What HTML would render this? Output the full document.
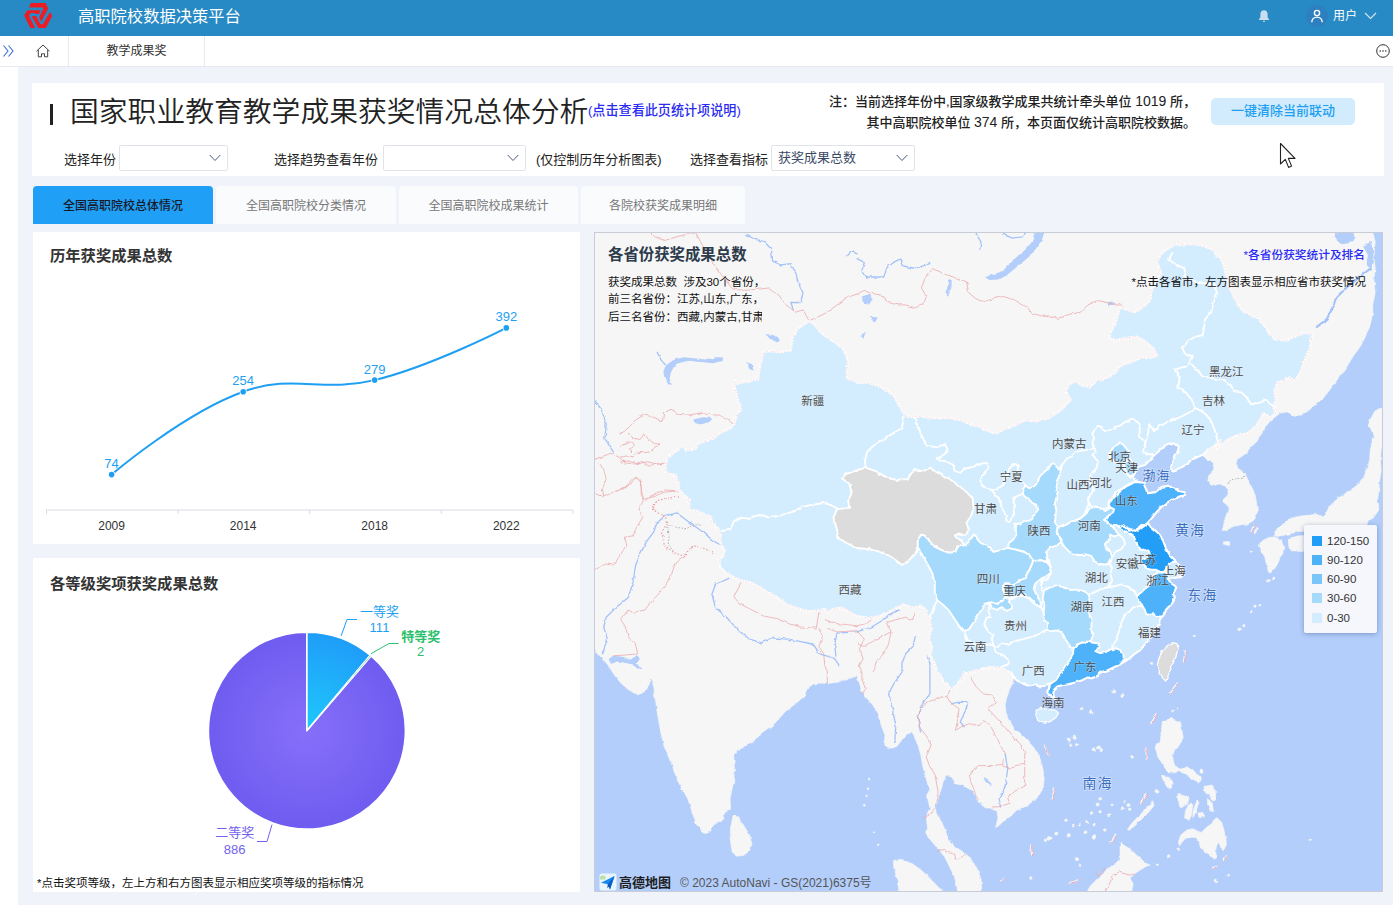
<!DOCTYPE html>
<html lang="zh-CN">
<head>
<meta charset="utf-8">
<title>高职院校数据决策平台</title>
<style>
*{box-sizing:border-box;margin:0;padding:0}
html,body{width:1393px;height:905px;overflow:hidden;background:#fff}
body{position:relative;font-family:"Liberation Sans","Noto Sans CJK SC",sans-serif;color:#333;font-size:12px}
.abs{position:absolute}
#hdr{left:0;top:0;width:1393px;height:36px;background:#288ac4}
#hdr .ttl{left:78px;top:0;height:32px;line-height:32px;font-size:16.3px;color:#fff;white-space:nowrap}
#hdr .usr{left:1333px;top:0;height:32px;line-height:32px;font-size:12px;color:#fff;white-space:nowrap}
#tabbar{left:0;top:36px;width:1393px;height:31px;background:#fff;border-bottom:1px solid #e6e9ef}
#tabbar .sep{top:0;width:1px;height:30px;background:#e6e9ef}
#tabbar .t1{left:69px;top:0;width:135px;height:30px;line-height:31px;text-align:center;font-size:12px;color:#333}
#side{left:0;top:67px;width:18px;height:838px;background:#fff}
#main{left:18px;top:67px;width:1375px;height:838px;background:#f0f4fa}
.card{background:#fff}
#tcard{left:32px;top:83px;width:1352px;height:93px}
#bigt{left:70px;top:91px;font-weight:350;height:42px;line-height:42px;font-size:28.8px;color:#222;white-space:nowrap;letter-spacing:0}
#bar{left:50px;top:104px;width:3px;height:21px;background:#222}
#lnk{left:588px;top:101px;height:20px;line-height:20px;font-size:13.1px;font-weight:500;color:#2a2af0;white-space:nowrap}
#note{left:770px;top:91px;width:426px;text-align:right;font-size:13px;font-weight:500;color:#222;line-height:20px;white-space:nowrap}
#note b{font-size:14px;font-weight:normal}
#btn{left:1211px;top:98px;width:144px;height:27px;border-radius:5px;background:#d2ebfd;color:#1e9ff2;font-size:13px;font-weight:500;text-align:center;line-height:26px}
.lbl{top:150px;height:20px;line-height:20px;font-size:13px;color:#222;white-space:nowrap}
.sel{top:145px;height:26px;border:1px solid #e0e3ea;border-radius:2px;background:#fff;font-size:13px;color:#3a4a66;line-height:23px;padding-left:6px;white-space:nowrap}
.sel svg{position:absolute;top:8px;width:12px;height:8px}
.tab{top:186px;height:38px;line-height:40px;text-align:center;font-size:12px;color:#777;background:#fafbfd;border-radius:4px 4px 0 0;white-space:nowrap}
.tab.on{background:#1f9ff5;color:#1a1a2a;font-weight:500}
.pt{font-size:15.3px;font-weight:bold;color:#333;white-space:nowrap;height:22px;line-height:22px}
#p1{left:33px;top:232px;width:547px;height:312px}
#p2{left:33px;top:558px;width:547px;height:334px}
#mapw{left:594px;top:232px;width:789px;height:660px;border:1px solid #c8ccd4;overflow:hidden;background:#b3cdfa}
</style>
</head>
<body>
<!-- header -->
<div id="hdr" class="abs">
  <svg class="abs" style="left:0;top:0" width="70" height="36" viewBox="0 0 70 36">
    <g fill="#ed1c24">
      <path d="M28.9 7.4 30.9 3 45.6 3 48.2 8.6 41.3 21.7 39.1 17.5 43.4 8.6 42.4 7.4Z"/>
      <path d="M40.9 10.3 27.3 10.3 24.1 15.5 30.3 28 35.1 28 29 15.7 30.9 13 34.9 13 35.3 13.9 38.9 13.9Z"/>
      <path d="M31.5 16.1 36.1 16.1 40.5 24.3 42.8 24.3 50 12.1 52.2 15.9 45.8 28 38.3 28Z"/>
    </g>
  </svg>
  <div class="abs ttl">高职院校数据决策平台</div>
  <svg class="abs" style="left:1256px;top:8px" width="16" height="16" viewBox="0 0 16 16"><path d="M8 2.2c-2.2 0-3.6 1.7-3.6 3.9v3.2L3 11.3v.7h10v-.7l-1.4-2V6.1C11.600 3.900 10.200 2.200 8 2.200ZM6.700 12.700h2.600c0 .7-.6 1.200-1.300 1.200s-1.300-.5-1.300-1.200Z" fill="#c9ddf0"/></svg>
  <svg class="abs" style="left:1306px;top:5px" width="22" height="22" viewBox="0 0 22 22"><circle cx="11" cy="11" r="11" fill="#2e7fc0"/><circle cx="11" cy="8" r="2.600" fill="none" stroke="#fff" stroke-width="1.400"/><path d="M5.800 17.300c0-3 2.300-5.200 5.200-5.200s5.200 2.200 5.200 5.200" fill="none" stroke="#fff" stroke-width="1.400"/></svg>
  <div class="abs usr">用户</div>
  <svg class="abs" style="left:1364px;top:12px" width="13" height="8" viewBox="0 0 13 8"><path d="M1 1l5.500 5.500L12 1" fill="none" stroke="#d6e6f4" stroke-width="1.100"/></svg>
</div>
<!-- page tab bar -->
<div id="tabbar" class="abs">
  <svg class="abs" style="left:2px;top:7px" width="14" height="16" viewBox="0 0 14 16"><path d="M1.500 2.500l4.500 5.500-4.500 5.500M6.500 2.500l4.500 5.500-4.500 5.500" fill="none" stroke="#3a6fd0" stroke-width="1.100"/></svg>
  <svg class="abs" style="left:35px;top:7px" width="16" height="16" viewBox="0 0 16 16"><path d="M1.500 8.200 8 2l6.500 6.200M3.300 7v6.800h3.200v-3h3v3h3.200V7" fill="none" stroke="#444" stroke-width="1"/></svg>
  <div class="abs sep" style="left:68px"></div>
  <div class="abs t1">教学成果奖</div>
  <div class="abs sep" style="left:204px"></div>
  <svg class="abs" style="left:1375px;top:7px" width="16" height="16" viewBox="0 0 16 16"><circle cx="8" cy="8" r="6.300" fill="none" stroke="#333" stroke-width="1"/><circle cx="5.200" cy="8" r=".8" fill="#333"/><circle cx="8" cy="8" r=".8" fill="#333"/><circle cx="10.800" cy="8" r=".8" fill="#333"/></svg>
</div>
<div id="side" class="abs"></div>
<div id="main" class="abs"></div>

<!-- title card -->
<div id="tcard" class="abs card"></div>
<div id="bar" class="abs"></div>
<div id="bigt" class="abs">国家职业教育教学成果获奖情况总体分析</div>
<div id="lnk" class="abs">(点击查看此页统计项说明)</div>
<div id="note" class="abs">注：当前选择年份中,国家级教学成果共统计牵头单位 <b>1019</b> 所，<br>其中高职院校单位 <b>374</b> 所，本页面仅统计高职院校数据。</div>
<div id="btn" class="abs">一键清除当前联动</div>
<svg class="abs" style="left:1279px;top:142px" width="20" height="30" viewBox="0 0 20 30"><path d="M1.500 1.500v20.500l4.800-4.600 3.300 8 3-1.300-3.300-7.700h6.700Z" fill="#fff" stroke="#222" stroke-width="1.100" stroke-linejoin="round"/></svg>

<div class="abs lbl" style="left:64px">选择年份</div>
<div class="abs sel" style="left:119px;width:109px"><svg style="left:89px" viewBox="0 0 12 8"><path d="M.7 1l5.300 5.500L11.300 1" fill="none" stroke="#4a5a78" stroke-width="1"/></svg></div>
<div class="abs lbl" style="left:274px">选择趋势查看年份</div>
<div class="abs sel" style="left:383px;width:143px"><svg style="left:123px" viewBox="0 0 12 8"><path d="M.7 1l5.300 5.500L11.300 1" fill="none" stroke="#4a5a78" stroke-width="1"/></svg></div>
<div class="abs lbl" style="left:536px">(仅控制历年分析图表)</div>
<div class="abs lbl" style="left:690px">选择查看指标</div>
<div class="abs sel" style="left:771px;width:144px">获奖成果总数<svg style="left:124px" viewBox="0 0 12 8"><path d="M.7 1l5.300 5.500L11.300 1" fill="none" stroke="#4a5a78" stroke-width="1"/></svg></div>

<!-- tabs -->
<div class="abs tab on" style="left:33px;width:180px">全国高职院校总体情况</div>
<div class="abs tab" style="left:216px;width:180px">全国高职院校分类情况</div>
<div class="abs tab" style="left:399px;width:179px">全国高职院校成果统计</div>
<div class="abs tab" style="left:581px;width:164px">各院校获奖成果明细</div>

<!-- panel 1: line chart -->
<div id="p1" class="abs card">
  <div class="abs pt" style="left:17px;top:13px">历年获奖成果总数</div>
  <svg class="abs" style="left:0;top:0" width="547" height="312" viewBox="0 0 547 312" font-family="'Liberation Sans','Noto Sans CJK SC',sans-serif">
<path d="M13 278.0H540" stroke="#d8dbe2" stroke-width="1" fill="none"/>
<path d="M13.5 278.0v4M145.1 278.0v4M276.7 278.0v4M408.3 278.0v4M539.9 278.0v4" stroke="#d8dbe2" stroke-width="1" fill="none"/>
<text x="78.6" y="298.0" font-size="12" fill="#333" text-anchor="middle">2009</text>
<text x="210.2" y="298.0" font-size="12" fill="#333" text-anchor="middle">2014</text>
<text x="341.7" y="298.0" font-size="12" fill="#333" text-anchor="middle">2018</text>
<text x="473.3" y="298.0" font-size="12" fill="#333" text-anchor="middle">2022</text>
<path d="M78.6 242.6 C78.6 242.6 150.4 181.2 210.2 159.7 C260.9 141.5 288.4 161.0 341.7 148.1 C398.9 134.2 473.3 95.9 473.3 95.9" fill="none" stroke="#1e9ff2" stroke-width="2" stroke-linecap="round"/>
<circle cx="78.6" cy="242.6" r="3.6" fill="#fff"/><circle cx="78.6" cy="242.6" r="2.8" fill="#1e9ff2"/>
<text x="78.6" y="236.1" font-size="13" fill="#1e9ff2" text-anchor="middle">74</text>
<circle cx="210.2" cy="159.7" r="3.6" fill="#fff"/><circle cx="210.2" cy="159.7" r="2.8" fill="#1e9ff2"/>
<text x="210.2" y="153.2" font-size="13" fill="#1e9ff2" text-anchor="middle">254</text>
<circle cx="341.7" cy="148.1" r="3.6" fill="#fff"/><circle cx="341.7" cy="148.1" r="2.8" fill="#1e9ff2"/>
<text x="341.7" y="141.6" font-size="13" fill="#1e9ff2" text-anchor="middle">279</text>
<circle cx="473.3" cy="95.9" r="3.6" fill="#fff"/><circle cx="473.3" cy="95.9" r="2.8" fill="#1e9ff2"/>
<text x="473.3" y="89.4" font-size="13" fill="#1e9ff2" text-anchor="middle">392</text>
</svg>
</div>

<!-- panel 2: pie chart -->
<div id="p2" class="abs card">
  <div class="abs pt" style="left:17px;top:15px">各等级奖项获奖成果总数</div>
  <svg class="abs" style="left:0;top:0" width="547" height="334" viewBox="0 0 547 334" font-family="'Liberation Sans','Noto Sans CJK SC',sans-serif">
<defs><radialGradient id="gp" gradientUnits="userSpaceOnUse" cx="273.9" cy="172.6" r="98.5"><stop offset="0" stop-color="#866ff9"/><stop offset="1" stop-color="#6f5cf0"/></radialGradient><radialGradient id="gb" gradientUnits="userSpaceOnUse" cx="273.9" cy="172.6" r="98.5"><stop offset="0" stop-color="#1fc8fc"/><stop offset="1" stop-color="#1f9df8"/></radialGradient></defs>
<path d="M273.90 172.60 L338.16 97.95 A98.5 98.5 0 1 1 273.90 74.10 Z" fill="url(#gp)" stroke="#fff" stroke-width="1.6" stroke-linejoin="round"/>
<path d="M273.90 172.60 L273.90 74.10 A98.5 98.5 0 0 1 337.21 97.14 Z" fill="url(#gb)" stroke="#fff" stroke-width="1.6" stroke-linejoin="round"/>
<path d="M273.90 172.60 L337.21 97.14 A98.5 98.5 0 0 1 338.16 97.95 Z" fill="#2dbf6e" stroke="#fff" stroke-width="1"/>
<path d="M308.2 77.8 L314.0 61.5 L324.0 61.5" fill="none" stroke="#1e9ff2" stroke-width="1"/>
<path d="M338.0 95.7 L356.0 85.5 L365.7 85.5" fill="none" stroke="#2dbf6e" stroke-width="1"/>
<path d="M239.0 266.6 L234.0 283.5 L224.0 283.5" fill="none" stroke="#7263ee" stroke-width="1"/>
<text x="346.5" y="58.0" font-size="13" fill="#1e9ff2" text-anchor="middle">一等奖</text>
<text x="346.5" y="73.7" font-size="13" fill="#1e9ff2" text-anchor="middle">111</text>
<text x="387.7" y="82.6" font-size="13" fill="#2dbf6e" text-anchor="middle" font-weight="bold">特等奖</text>
<text x="387.7" y="98.4" font-size="13" fill="#2dbf6e" text-anchor="middle">2</text>
<text x="201.7" y="279.3" font-size="13" fill="#7263ee" text-anchor="middle">二等奖</text>
<text x="201.7" y="295.7" font-size="13" fill="#7263ee" text-anchor="middle">886</text>
</svg>
  <div class="abs" style="left:4px;top:317px;font-size:11.5px;color:#111;white-space:nowrap;line-height:16px">*点击奖项等级，左上方和右方图表显示相应奖项等级的指标情况</div>
</div>

<!-- map -->
<div id="mapw" class="abs">
<svg class="abs" style="left:-1px;top:-1px" width="789" height="660" viewBox="594 232 789 660" font-family="'Liberation Sans','Noto Sans CJK SC',sans-serif">
<defs><filter id="rough" x="594" y="232" width="789" height="660" filterUnits="userSpaceOnUse"><feTurbulence type="fractalNoise" baseFrequency="0.16" numOctaves="2" seed="7" result="n"/><feDisplacementMap in="SourceGraphic" in2="n" scale="3.2" xChannelSelector="R" yChannelSelector="G"/></filter></defs>
<rect x="590" y="228" width="800" height="670" fill="#b3cefb"/>
<g filter="url(#rough)">
<g fill="#f6f6f6" stroke="#f6f6f6" stroke-width="0.6" stroke-linejoin="round">
<path d="M1372.8 232.0 1375.2 241.7 1374.0 256.3 1375.2 268.5 1374.0 280.6 1375.2 292.8 1372.8 304.9 1372.8 312.2 1370.4 324.4 1365.5 336.5 1360.6 346.2 1353.3 356.0 1346.1 368.1 1338.8 377.8 1331.5 387.6 1324.2 397.3 1314.5 405.8 1304.7 413.1 1295.0 416.7 1287.7 411.9 1280.4 413.1 1275.6 416.7 1270.7 420.4 1265.8 426.5 1261.0 433.8 1257.3 441.0 1251.3 447.1 1246.4 452.0 1247.5 452.2 1243.0 455.5 1238.6 458.8 1236.4 462.1 1235.9 466.0 1238.6 468.7 1241.9 470.9 1245.2 474.3 1247.5 478.7 1250.2 484.2 1253.0 489.7 1255.2 495.2 1256.3 500.8 1256.9 506.3 1257.4 511.8 1256.3 516.2 1254.1 520.1 1250.8 522.3 1247.5 524.0 1243.0 524.5 1238.6 525.6 1234.2 527.3 1229.8 528.4 1225.4 530.1 1222.0 530.6 1223.1 527.3 1224.3 521.8 1225.4 517.3 1227.0 512.9 1228.1 508.5 1226.5 504.6 1223.1 501.9 1223.1 498.6 1227.0 496.4 1228.1 493.0 1227.6 489.2 1225.4 486.4 1222.0 484.2 1217.6 484.2 1213.8 485.9 1210.4 484.2 1207.7 480.9 1208.8 476.5 1211.5 473.1 1213.8 468.7 1213.8 463.8 1211.0 461.0 1205.5 458.2 1202.2 454.9 1202.2 454.9 1196.6 457.7 1190.0 459.9 1188.3 463.6 1181.7 467.0 1176.0 469.8 1171.3 472.2 1171.3 467.0 1172.3 461.3 1174.2 455.7 1177.9 451.0 1178.9 446.3 1174.2 443.5 1168.5 443.5 1163.8 446.3 1159.1 451.0 1153.5 455.7 1149.7 460.4 1145.0 465.1 1140.3 466.0 1135.7 468.8 1132.8 474.5 1133.8 478.2 1136.6 482.0 1143.2 482.9 1146.0 489.5 1147.9 493.3 1155.4 492.3 1162.0 486.7 1168.5 485.8 1174.2 488.6 1179.8 491.4 1184.5 492.3 1183.6 495.1 1177.9 497.0 1172.3 499.8 1166.7 502.7 1162.0 506.4 1157.3 511.1 1153.5 515.8 1149.7 520.5 1146.9 523.3 1147.7 523.4 1150.7 526.9 1155.7 530.9 1159.7 534.9 1162.6 539.9 1164.6 544.8 1166.6 549.8 1169.6 554.8 1173.6 558.8 1176.6 561.7 1179.6 565.7 1182.5 569.7 1183.6 570.0 1184.1 574.9 1179.7 576.9 1174.7 577.9 1170.7 577.4 1169.2 579.4 1169.7 582.4 1173.7 584.9 1176.2 587.4 1174.7 590.8 1172.7 593.8 1174.7 596.8 1173.7 600.8 1171.7 603.8 1168.7 606.8 1165.7 609.8 1163.7 613.7 1161.7 616.7 1159.8 620.7 1159.1 623.9 1155.4 629.5 1151.6 635.1 1147.9 640.8 1144.1 645.5 1140.3 650.2 1134.7 653.9 1130.0 657.7 1125.3 661.4 1119.7 664.3 1114.0 667.1 1108.4 669.9 1102.8 671.8 1099.0 673.7 1095.3 676.5 1091.5 678.4 1087.7 677.4 1082.1 680.2 1076.5 682.1 1069.0 684.0 1063.3 684.9 1057.7 686.2 1053.9 689.6 1053.0 695.3 1054.9 699.0 1051.1 698.1 1048.3 693.4 1049.2 687.7 1050.2 684.0 1044.5 685.9 1038.9 686.2 1033.3 684.9 1027.6 685.5 1023.9 684.0 1020.1 682.1 1016.4 680.2 1014.5 677.4 1012.6 682.1 1009.8 689.6 1007.0 697.1 1005.1 704.7 1006.0 712.2 1008.8 719.7 1013.5 727.2 1015.2 729.9 1019.9 732.8 1027.2 740.1 1035.7 749.8 1040.5 759.5 1043.0 769.2 1044.2 779.0 1043.0 788.7 1039.3 796.0 1032.0 802.0 1024.7 806.9 1016.2 810.6 1011.4 815.4 1002.8 822.7 995.6 827.6 998.0 817.8 996.8 810.6 991.9 808.1 985.8 808.1 981.0 804.5 977.3 800.8 973.7 792.3 968.8 788.7 961.5 785.0 954.2 783.8 954.2 779.0 950.6 775.3 945.7 776.5 943.3 781.4 940.9 791.1 938.4 798.4 934.8 808.1 937.2 815.4 942.1 822.7 945.7 832.4 948.2 839.7 953.0 845.8 961.5 850.7 966.4 854.3 971.2 859.2 977.3 868.9 981.0 878.6 982.2 893.2 957.9 893.2 956.7 885.9 954.2 876.2 949.4 866.5 944.5 856.7 938.4 849.4 932.4 842.2 926.3 834.9 927.5 827.6 926.3 817.8 929.9 808.1 927.5 798.4 928.7 788.7 926.3 779.0 922.6 766.8 920.7 754.6 917.8 744.9 914.1 736.4 911.7 732.8 908.0 734.0 902.0 740.1 895.9 747.4 887.4 748.6 883.7 744.9 885.0 735.2 881.3 725.5 877.7 714.5 871.6 703.6 863.1 693.9 858.9 682.9 857.0 675.6 846.8 679.3 837.1 682.2 827.3 683.7 820.1 682.9 812.8 684.2 806.0 690.2 804.3 696.3 795.8 703.6 786.0 710.9 773.9 724.3 761.7 732.8 755.6 740.1 745.9 744.9 737.4 749.8 733.8 757.1 734.5 769.2 733.8 781.4 730.1 798.4 730.6 809.3 726.5 810.6 722.8 815.4 724.0 819.1 719.2 821.5 713.6 825.1 710.7 831.2 706.3 833.4 702.2 831.2 696.1 823.9 692.4 813.0 687.6 798.4 677.9 781.4 671.8 764.4 664.5 747.4 660.8 732.8 657.7 715.8 654.8 696.3 653.6 686.6 651.9 680.5 650.4 676.9 649.4 682.9 646.3 690.2 639.0 695.1 630.5 691.4 620.7 682.9 614.7 675.6 608.6 665.9 603.7 659.8 597.6 653.8 592.8 647.7 590.0 228.0Z"/>
<path d="M733.0 815.4 737.4 816.6 743.5 825.1 749.6 834.9 752.0 843.4 749.6 850.7 743.5 855.5 736.2 856.2 732.1 850.7 730.1 839.7 730.6 827.6 732.1 820.3Z"/>
<path d="M893.5 860.4 900.8 859.2 912.9 864.0 922.6 871.3 932.4 881.0 939.6 888.3 945.7 894.4 899.5 894.4 897.1 878.6 893.5 866.5Z"/>
<path d="M1085.5 894.4 1090.3 885.9 1100.1 876.2 1107.4 868.9 1114.7 864.0 1120.0 859.2 1120.0 842.2 1124.9 845.8 1130.9 849.4 1137.0 855.5 1144.3 861.6 1149.2 865.2 1141.9 868.9 1134.6 873.8 1129.7 878.6 1133.4 883.5 1130.9 894.4Z"/>
<path d="M1162.5 720.6 1172.3 718.7 1180.3 721.8 1182.0 730.3 1183.2 737.6 1179.6 744.9 1174.7 749.8 1172.3 757.1 1174.7 765.6 1180.8 769.2 1186.8 766.8 1192.9 770.4 1197.8 774.1 1201.4 779.0 1199.0 783.8 1192.9 779.0 1188.1 775.3 1183.2 772.9 1178.3 771.7 1173.5 772.9 1168.6 772.9 1165.0 768.0 1161.3 761.9 1157.7 757.1 1155.2 747.4 1156.5 743.7 1160.1 742.5 1161.3 732.8 1161.8 725.5Z"/>
<path d="M1161.3 775.3 1168.6 776.5 1172.3 781.4 1171.5 788.2 1167.4 787.5 1163.8 781.4Z"/>
<path d="M1203.9 786.2 1212.4 785.0 1215.3 791.1 1216.0 799.6 1212.4 800.8 1208.7 796.0 1205.1 792.3Z"/>
<path d="M1207.5 798.4 1212.4 803.3 1213.6 811.8 1209.9 810.6 1207.5 804.5Z"/>
<path d="M1177.9 793.5 1184.4 794.8 1190.5 798.4 1186.8 804.5 1180.8 808.1 1177.9 803.3Z"/>
<path d="M1189.3 803.3 1192.9 804.5 1191.7 813.0 1189.3 820.3 1184.4 817.8 1185.6 810.6Z"/>
<path d="M1196.6 800.8 1199.0 802.0 1195.4 813.0 1192.9 817.8 1192.9 811.8Z"/>
<path d="M1197.8 813.0 1203.9 812.5 1204.6 816.6 1199.0 817.4Z"/>
<path d="M1127.3 830.0 1132.2 822.7 1138.2 816.6 1144.3 810.6 1150.4 804.5 1152.8 800.8 1154.0 805.7 1148.0 813.0 1141.9 819.1 1135.8 825.1 1129.7 830.0Z"/>
<path d="M1178.3 842.2 1180.8 834.9 1186.8 830.0 1192.9 828.8 1197.8 831.2 1201.4 832.4 1206.3 827.6 1211.2 823.9 1217.2 817.8 1220.9 821.5 1223.3 827.6 1225.7 837.3 1226.5 844.6 1223.3 850.7 1220.9 847.0 1218.4 842.2 1216.0 847.0 1216.0 856.7 1213.6 860.4 1209.9 855.5 1203.9 851.9 1200.2 847.0 1199.0 840.9 1195.4 837.3 1190.5 837.3 1185.6 838.5 1182.0 842.2 1179.6 845.8Z"/>
<path d="M1223.3 541.9 1229.4 541.5 1229.9 544.9 1223.3 545.3Z"/>
<path d="M1258.1 545.3 1262.7 540.6 1268.9 537.5 1275.1 536.7 1281.3 540.6 1283.6 546.8 1282.9 553.0 1279.8 559.2 1276.7 565.4 1272.8 571.6 1269.7 573.1 1267.4 568.5 1265.8 562.3 1264.3 556.1 1261.2 551.5Z"/>
<path d="M1372.6 438.5 1370.3 449.3 1369.6 458.6 1368.0 467.9 1363.4 477.2 1357.2 484.9 1349.4 491.1 1341.7 495.7 1335.5 500.4 1329.3 506.6 1326.2 512.8 1323.1 517.4 1316.9 514.3 1309.2 515.1 1301.4 515.9 1293.7 517.4 1287.5 520.5 1281.3 526.7 1275.1 531.3 1273.6 535.2 1278.2 536.3 1286.0 534.7 1292.2 533.2 1298.3 531.6 1304.5 531.3 1316.9 532.9 1332.4 534.4 1347.9 532.9 1363.4 529.8 1369.6 520.5 1374.2 515.9 1378.1 509.7 1377.3 501.9 1378.8 491.1 1379.6 480.2 1381.2 471.0 1380.4 460.1 1381.2 449.3 1385.8 443.1 1385.8 438.5Z"/>
<path d="M1288.3 540.6 1292.2 537.5 1298.3 536.0 1304.5 535.2 1316.9 536.0 1320.0 542.2 1313.8 548.4 1301.4 551.5 1292.2 550.7 1289.1 546.8Z"/>
<path d="M1387.4 405.8 1375.2 410.7 1370.4 419.2 1367.9 426.5 1372.8 431.3 1375.2 441.0 1378.9 445.9 1387.4 443.5Z"/>
<path d="M1254.1 532.3 1256.1 527.3 1257.4 527.5 1255.9 533.0Z"/>
<circle cx="1268.3" cy="580.8" r="1.3"/>
<circle cx="1273.1" cy="578.4" r="1.3"/>
<circle cx="1254.9" cy="606.4" r="1.3"/>
<circle cx="1259.8" cy="604.6" r="1.3"/>
<circle cx="1251.3" cy="612.4" r="1.0"/>
<circle cx="1239.1" cy="629.4" r="1.3"/>
<circle cx="1244.0" cy="625.8" r="1.3"/>
<circle cx="1194.1" cy="635.5" r="1.3"/>
<circle cx="1251.3" cy="551.7" r="1.0"/>
<circle cx="1151.6" cy="663.5" r="1.3"/>
<circle cx="1122.4" cy="695.1" r="1.6"/>
<circle cx="1132.2" cy="756.6" r="1.6"/>
<circle cx="1172.3" cy="710.9" r="1.0"/>
<circle cx="1177.1" cy="708.5" r="0.7"/>
<circle cx="1156.5" cy="791.1" r="1.6"/>
<circle cx="1201.4" cy="771.7" r="1.6"/>
<circle cx="1228.2" cy="875.0" r="1.3"/>
<circle cx="1215.3" cy="881.5" r="1.3"/>
<circle cx="1178.3" cy="849.4" r="1.3"/>
<circle cx="1168.6" cy="856.0" r="1.3"/>
<circle cx="1156.5" cy="865.2" r="1.3"/>
<circle cx="1310.8" cy="839.7" r="0.7"/>
<circle cx="1121.9" cy="808.1" r="1.6"/>
<circle cx="1128.5" cy="805.2" r="1.6"/>
<circle cx="1124.9" cy="802.0" r="1.3"/>
<circle cx="1129.7" cy="809.3" r="1.3"/>
<circle cx="1068.5" cy="740.1" r="2.0"/>
<circle cx="1074.5" cy="737.6" r="1.6"/>
<circle cx="1077.0" cy="744.9" r="1.6"/>
<circle cx="1070.9" cy="744.9" r="1.3"/>
<circle cx="1094.0" cy="749.8" r="2.0"/>
<circle cx="1098.9" cy="747.4" r="1.6"/>
<circle cx="1101.3" cy="749.8" r="1.3"/>
<circle cx="1091.6" cy="712.1" r="1.3"/>
<circle cx="1113.4" cy="691.4" r="1.6"/>
<circle cx="1081.8" cy="708.5" r="1.3"/>
<circle cx="1100.1" cy="798.4" r="1.6"/>
<circle cx="1097.6" cy="804.5" r="1.6"/>
<circle cx="1112.2" cy="804.5" r="1.3"/>
<circle cx="1091.6" cy="813.0" r="1.3"/>
<circle cx="1100.1" cy="811.8" r="1.3"/>
<circle cx="1108.6" cy="815.4" r="1.3"/>
<circle cx="1087.9" cy="821.5" r="1.3"/>
<circle cx="1094.0" cy="825.1" r="1.3"/>
<circle cx="1104.9" cy="830.0" r="1.3"/>
<circle cx="1066.0" cy="820.3" r="1.3"/>
<circle cx="1073.3" cy="825.1" r="1.0"/>
<circle cx="1079.4" cy="825.1" r="1.0"/>
<circle cx="1085.5" cy="832.4" r="1.6"/>
<circle cx="1094.0" cy="837.3" r="2.0"/>
<circle cx="1068.5" cy="834.9" r="2.0"/>
<circle cx="1056.3" cy="833.6" r="1.6"/>
<circle cx="1049.0" cy="838.5" r="2.0"/>
<circle cx="1045.4" cy="840.2" r="1.3"/>
<circle cx="1077.0" cy="859.2" r="1.6"/>
<circle cx="1079.4" cy="865.2" r="1.3"/>
<circle cx="1030.8" cy="878.1" r="1.3"/>
<circle cx="869.2" cy="779.0" r="1.0"/>
<circle cx="867.9" cy="788.7" r="1.0"/>
<circle cx="866.7" cy="796.0" r="1.0"/>
<circle cx="864.3" cy="805.2" r="1.0"/>
<circle cx="878.4" cy="845.1" r="1.0"/>
<circle cx="874.0" cy="832.4" r="0.7"/>
</g>
<g fill="#b3cefb">
<path d="M608.6 659.1 613.4 655.7 623.2 656.7 630.5 659.8 636.5 655.0 640.2 658.6 636.5 663.5 642.6 667.8 637.8 668.8 630.5 664.0 623.2 662.5 615.9 661.5 611.0 664.0Z"/>
<path d="M663.3 371.8 666.9 364.5 674.2 359.6 683.9 357.2 696.1 358.4 705.8 359.6 715.5 357.2 722.8 357.2 722.8 360.8 713.1 363.3 701.0 362.0 688.8 360.8 677.9 363.3 671.8 369.3 669.4 377.8 671.8 385.1 668.1 383.9 664.5 377.8Z"/>
<path d="M745.9 362.0 753.2 364.5 754.4 370.6 749.6 369.3Z"/>
<path d="M765.4 334.1 773.9 335.3 780.0 340.2 777.5 342.6 770.2 339.0Z"/>
<path d="M693.7 419.2 703.4 417.2 711.9 418.0 710.7 421.6 701.0 424.5 693.7 422.8Z"/>
<path d="M984.6 277.0 993.1 274.5 1002.8 270.9 1010.1 263.6 1017.4 256.3 1024.7 250.2 1032.0 241.7 1035.7 229.6 1045.4 229.6 1041.7 240.5 1035.7 249.0 1029.6 256.3 1022.3 262.4 1015.0 268.5 1007.7 274.5 998.0 279.4 989.5 280.1Z"/>
<path d="M948.2 279.4 951.8 279.4 951.3 287.9 948.2 295.7 946.5 294.0 947.4 286.7Z"/>
<path d="M861.9 296.4 869.2 294.0 872.8 298.8 869.2 304.4 863.1 303.7Z"/>
<path d="M869.2 316.6 877.7 317.6 875.2 321.9Z"/>
<path d="M859.4 335.3 866.7 331.7 864.3 339.0Z"/>
<path d="M1107.4 302.5 1112.2 301.5 1113.4 304.4 1108.6 305.4Z"/>
<path d="M983.4 777.7 987.0 779.0 991.9 784.3 990.2 785.8 985.3 781.4Z"/>
<path d="M1333.9 234.4 1341.2 232.0 1353.3 232.0 1354.6 238.1 1348.5 242.9 1342.4 244.2 1337.5 240.5Z"/>
<path d="M1363.1 246.6 1370.4 241.7 1372.8 249.0 1374.0 261.2 1370.4 270.9 1366.7 263.6 1367.9 255.1Z"/>
</g>
<g fill="none" stroke="#a3c2fa" stroke-width="1.3" stroke-linejoin="round" stroke-linecap="round">
<path d="M721.6 545.6 713.1 540.7 703.4 532.2 691.2 523.7 676.6 512.8 664.5 516.4 657.2 522.5 653.6 532.2 646.3 541.9 640.2 554.1 635.3 566.2 632.9 583.3 628.0 597.8 615.9 607.6 606.2 617.3 603.7 627.0 607.4 639.2 602.5 653.8 M728.9 578.4 715.5 584.5 711.9 594.2 715.5 607.6 726.5 617.3 737.4 629.4 749.6 639.2 761.7 642.8 773.9 638.0 788.5 639.2 800.6 641.6 812.8 644.0 820.1 653.8 834.6 658.6 839.5 665.9 M857.0 631.9 837.1 633.1 834.6 644.0 835.9 656.2 M857.0 631.9 871.6 627.0 883.7 619.7 893.5 612.4 899.5 609.5 M902.0 672.0 893.5 684.2 888.6 693.9 892.2 708.5 895.9 725.5 894.7 742.5 M929.9 672.0 929.9 693.9 922.6 703.6 917.8 718.2 920.7 732.8 M1005.3 754.6 1007.7 769.2 1005.3 786.2 999.2 798.4 1000.4 806.9 M950.6 703.6 959.1 702.4 967.6 702.4 966.4 708.5 960.3 721.8 964.0 726.7 M915.3 636.7 912.9 646.5 905.6 653.8 902.0 663.5 902.0 672.0 M927.5 656.2 929.9 663.5 929.9 672.0 M745.9 234.4 754.4 239.3 764.2 241.7 771.4 249.0 772.7 261.2 781.2 264.8 790.9 263.6 795.8 273.3 798.2 283.0 803.0 292.8 800.6 302.5 790.9 302.5 793.3 309.8 M846.8 256.3 851.7 251.4 857.0 253.9 M594.0 399.7 601.3 409.4 606.2 424.0 604.9 438.6 613.4 452.0 M657.2 352.3 660.8 359.6 665.7 365.2 M857.0 258.7 864.3 262.4 861.9 270.9 866.7 277.0 883.7 277.0 886.2 268.5 893.5 262.4 900.8 258.7 903.2 266.0 915.3 268.5 929.9 263.6 M976.1 234.4 981.0 241.7 979.8 249.0 M1002.8 234.4 1012.6 238.1 1022.3 236.9 1024.7 233.2"/>
<path d="M1370.4 268.5 1358.2 278.2 1346.1 287.9 1336.3 297.6 1331.5 309.8 1326.6 319.5 1316.9 326.8" stroke-width="2.2"/>
</g>
<g fill="none" stroke="#eba9ad" stroke-width="0.8" stroke-linejoin="round">
<path d="M922.6 817.8 928.7 816.6 934.8 808.1 938.4 796.0 937.2 786.2 934.8 774.1 929.9 766.8 926.3 757.1 931.1 744.9 927.5 737.6 920.2 727.9 917.8 718.2 921.4 707.2 929.9 701.2 939.6 697.5 946.9 696.3 950.6 689.0 956.7 685.4 M946.9 696.3 950.6 703.6 959.1 708.5 957.9 718.2 955.4 730.3 961.5 726.7 971.2 723.0 978.5 726.7 983.4 720.6 989.5 724.3 995.6 735.2 1000.4 744.9 1004.1 752.2 1002.8 764.4 M970.0 676.9 976.1 686.6 983.4 693.9 991.9 695.1 996.8 702.4 988.3 708.5 995.6 717.0 1005.3 727.9 1012.6 736.4 1019.9 743.7 1024.7 752.2 1024.7 764.4 M1002.8 764.4 993.1 765.6 978.5 765.6 971.2 771.7 970.0 779.0 973.7 788.7 977.3 799.6 M1002.8 765.6 1010.1 769.2 1015.0 765.6 1024.7 764.4 1024.7 786.2 1015.0 791.1 1007.7 798.4 1010.1 803.3 998.0 806.9 991.9 806.9 M936.0 851.9 944.5 849.4 954.2 854.3 956.7 859.2 962.7 856.7 966.4 854.3 M861.9 679.3 865.5 689.0 861.9 693.9 M1094.0 871.3 1097.6 876.2 1102.5 873.8 1104.9 867.7 M1120.0 871.3 1112.2 876.2 1109.8 883.5 1104.9 892.0 M1120.0 872.5 1129.7 875.0 1134.6 873.8 M594.0 493.3 603.7 497.0 611.0 493.3 620.7 489.7 629.2 486.0 635.3 477.5 640.2 481.2 641.4 490.9 643.8 499.4 652.3 497.0 664.5 492.1 677.9 490.9 M597.6 462.9 603.7 469.0 606.2 478.7 602.5 488.5 603.7 497.0 M594.0 459.3 601.3 456.9 611.0 453.2 618.3 456.9 625.6 462.9 635.3 464.2 647.5 461.7 657.2 464.2 666.9 462.9 M643.8 499.4 639.0 509.1 642.6 517.6 636.5 527.4 632.9 535.9 624.4 537.1 626.8 544.4 619.5 556.5 613.4 565.0 603.7 563.8 594.0 571.1 M685.2 556.5 675.4 562.6 671.8 573.5 665.7 584.5 658.4 594.2 651.1 601.5 645.0 610.0 632.9 612.4 628.0 610.0 620.7 619.7 625.6 627.0 628.0 636.7 635.3 644.0 637.8 653.8 625.6 655.0 613.4 655.7 M741.1 583.3 733.8 596.6 739.8 603.9 752.0 610.0 764.2 616.1 776.3 618.5 788.5 623.4 800.6 627.0 816.4 628.2 818.8 612.4 M824.9 619.7 834.6 623.4 846.8 624.6 857.0 625.8 866.7 623.4 871.6 619.7 M818.8 628.2 822.5 636.7 818.8 646.5 823.7 653.8 824.9 665.9 827.3 672.0 827.3 683.7 M827.3 628.2 837.1 631.9 857.0 630.7 864.3 639.2 859.4 648.9 863.1 658.6 859.4 665.9 861.9 672.0 861.9 679.3 M857.0 644.0 864.3 646.5 871.6 641.6 881.3 636.7 891.0 631.9 886.2 622.2 895.9 619.7 905.6 617.3 912.9 619.7 914.1 612.4 M891.0 631.9 888.6 644.0 883.7 653.8 876.4 661.0 874.0 672.0 M649.9 232.0 654.8 236.9 664.5 240.5 676.6 236.9 686.4 234.4 696.1 233.2 708.2 256.3 720.4 273.3 732.6 289.1 744.7 290.3 759.3 289.1 769.0 287.9 778.7 295.2 786.0 304.9 795.8 312.2 803.0 309.8 809.1 320.7 M809.1 320.7 817.6 317.1 827.3 312.2 837.1 304.9 846.8 297.6 857.0 294.0 864.3 290.3 869.2 292.8 883.7 295.7 887.4 302.5 898.3 304.9 905.6 304.9 915.3 307.8 923.8 303.7 926.3 296.4 921.4 287.9 925.1 278.2 932.4 268.5 942.1 273.3 954.2 277.0 966.4 281.8 968.8 292.8 976.1 298.8 983.4 302.0 993.1 298.8 1002.8 296.4 1015.0 300.1 1027.2 307.4 1032.0 313.4 1041.7 315.9 1051.5 317.1 1058.8 318.3 1068.5 314.6 1080.6 312.2 1087.9 304.9 1097.6 300.5 1107.4 302.5 1114.7 304.9 1120.0 304.9 1128.5 312.2 M620.0 434.3 625.3 430.4 630.6 425.7 635.9 419.8 643.9 415.1 653.1 417.1 662.4 421.1 663.7 413.1 671.0 409.2 679.7 414.5 688.9 415.1 699.5 413.1 710.1 414.7 719.4 415.1 724.7 418.4 730.0 421.1 734.0 425.1 M628.0 433.0 633.3 438.3 639.9 439.7 644.5 433.7 648.5 439.7 654.5 443.6 659.8 444.3 654.5 447.6 650.5 451.6 643.9 452.9 637.2 452.2 633.3 456.9 628.0 455.6 620.0 457.5 M620.0 445.6 626.6 443.6 631.9 441.6 634.6 445.0 629.3 448.9 633.3 452.2 M620.0 462.2 628.0 460.9 635.9 463.5 642.5 461.5 649.2 466.2 654.5 464.2 662.4 463.5 M620.0 488.7 628.0 486.0 630.6 480.7 635.9 476.1 639.9 478.8 641.2 486.0 641.2 495.3 643.2 500.0 M646.5 499.3 654.5 494.0 661.1 490.7 666.4 490.0 675.7 490.7"/>
<path d="M652.3 507.9 657.2 500.6 666.9 498.2 677.9 497.0 M652.3 509.1 659.6 514.0 665.7 518.8 666.9 524.9 662.1 532.2 664.5 545.6 674.2 552.9 685.2 556.5 688.8 549.2 696.1 545.6 705.8 549.2 714.3 554.1" stroke="#ec9aa0" stroke-width="1.3" stroke-dasharray="1.4 1.8"/>
<path d="M666.9 524.9 676.6 527.4 686.4 528.6 693.7 524.9 701.0 524.9 M666.9 524.9 669.4 534.6 668.1 544.4 674.2 551.7 M1227.6 483.6 1230.9 479.8 1236.4 478.7 1241.9 478.1 1245.2 474.8" stroke="#888" stroke-width="0.6" stroke-dasharray="1.5 1.5"/>
</g>
<path d="M809.1 320.7 814.0 324.4 820.1 331.7 827.3 337.7 837.1 343.8 844.4 351.1 848.0 360.8 846.8 370.6 846.8 377.8 851.7 380.3 857.0 382.7 866.7 382.7 876.4 385.1 886.2 390.0 893.5 394.9 898.3 404.6 903.2 413.1 908.0 416.7 920.2 416.7 934.8 418.0 949.4 418.0 961.5 420.4 973.7 425.2 985.8 430.1 995.6 433.8 1002.8 430.1 1012.6 426.5 1024.7 420.4 1036.9 421.6 1049.0 418.0 1058.8 411.9 1066.0 404.6 1070.9 399.7 1066.0 392.4 1068.5 385.1 1074.5 381.5 1083.1 386.4 1090.3 386.4 1097.6 380.3 1107.4 377.8 1114.7 374.2 1120.0 365.7 1127.3 363.3 1134.6 360.8 1141.9 357.2 1149.2 358.4 1156.5 356.0 1154.0 348.7 1146.7 342.6 1137.0 336.5 1127.3 337.7 1120.0 339.0 1114.7 341.4 1109.8 337.7 1111.0 331.7 1115.9 321.9 1120.0 307.4 1127.3 309.8 1134.6 312.2 1143.1 307.4 1150.4 300.1 1151.6 290.3 1156.5 283.0 1161.3 273.3 1157.7 263.6 1160.1 255.1 1167.4 249.0 1175.9 245.4 1185.6 244.2 1195.4 244.2 1205.1 246.6 1213.6 251.4 1220.9 258.7 1224.5 268.5 1227.0 280.6 1231.8 292.8 1236.7 303.7 1244.0 312.2 1256.1 317.1 1263.4 324.4 1269.5 334.1 1275.6 340.2 1285.3 340.2 1295.0 336.5 1304.7 332.9 1312.0 334.1 1310.8 343.8 1307.2 353.5 1303.5 363.3 1299.9 373.0 1295.0 380.3 1287.7 377.8 1278.0 382.7 1274.4 390.0 1275.6 399.7 1273.1 407.0 1275.6 413.1 1270.7 416.7 1263.4 413.1 1259.8 419.2 1256.1 426.5 1246.4 433.8 1237.9 435.0 1229.4 438.6 1222.1 443.5 1216.0 448.3 1220.9 440.0 1217.6 443.3 1213.2 446.6 1207.7 450.5 1202.2 454.9 1196.6 457.7 1190.0 459.9 1188.3 463.6 1181.7 467.0 1176.0 469.8 1171.3 472.2 1171.3 467.0 1172.3 461.3 1174.2 455.7 1177.9 451.0 1178.9 446.3 1174.2 443.5 1168.5 443.5 1163.8 446.3 1159.1 451.0 1153.5 455.7 1149.7 460.4 1145.0 465.1 1140.3 466.0 1135.7 468.8 1132.8 474.5 1133.8 478.2 1136.6 482.0 1143.2 482.9 1146.0 489.5 1147.9 493.3 1155.4 492.3 1162.0 486.7 1168.5 485.8 1174.2 488.6 1179.8 491.4 1184.5 492.3 1183.6 495.1 1177.9 497.0 1172.3 499.8 1166.7 502.7 1162.0 506.4 1157.3 511.1 1153.5 515.8 1149.7 520.5 1146.9 523.3 1147.7 523.4 1150.7 526.9 1155.7 530.9 1159.7 534.9 1162.6 539.9 1164.6 544.8 1166.6 549.8 1169.6 554.8 1173.6 558.8 1176.6 561.7 1179.6 565.7 1182.5 569.7 1183.6 570.0 1184.1 574.9 1179.7 576.9 1174.7 577.9 1170.7 577.4 1169.2 579.4 1169.7 582.4 1173.7 584.9 1176.2 587.4 1174.7 590.8 1172.7 593.8 1174.7 596.8 1173.7 600.8 1171.7 603.8 1168.7 606.8 1165.7 609.8 1163.7 613.7 1161.7 616.7 1159.8 620.7 1159.1 623.9 1155.4 629.5 1151.6 635.1 1147.9 640.8 1144.1 645.5 1140.3 650.2 1134.7 653.9 1130.0 657.7 1125.3 661.4 1119.7 664.3 1114.0 667.1 1108.4 669.9 1102.8 671.8 1099.0 673.7 1095.3 676.5 1091.5 678.4 1087.7 677.4 1082.1 680.2 1076.5 682.1 1069.0 684.0 1063.3 684.9 1057.7 686.2 1053.9 689.6 1053.0 695.3 1054.9 699.0 1051.1 698.1 1048.3 693.4 1049.2 687.7 1050.2 684.0 1044.5 685.9 1038.9 686.2 1033.3 684.9 1027.6 685.5 1023.9 684.0 1020.1 682.1 1016.4 680.2 1014.5 677.4 1010.7 672.7 1005.1 669.9 1001.3 667.1 995.7 669.0 991.9 666.1 986.3 668.0 980.7 669.0 975.0 670.8 969.4 672.7 963.8 673.7 964.0 672.0 961.5 679.3 956.7 685.4 950.6 689.0 945.7 682.9 940.9 676.9 937.2 672.0 934.8 663.5 931.1 656.2 932.4 646.5 928.7 639.2 931.1 629.4 929.9 619.7 926.3 610.0 920.2 606.4 912.9 607.6 902.0 603.9 898.3 607.6 886.2 613.6 871.6 618.5 857.0 616.1 841.9 607.6 833.4 608.8 827.3 612.4 824.9 608.8 817.6 610.5 807.9 611.2 795.8 607.6 786.0 603.9 776.3 596.6 769.0 593.0 759.3 586.9 749.6 582.0 742.3 580.8 733.8 577.2 726.5 573.5 720.4 567.5 719.2 559.0 724.0 555.3 725.3 550.4 720.4 545.6 721.6 537.1 719.2 531.0 714.3 524.9 710.7 516.4 701.0 512.8 691.2 509.1 687.6 499.4 688.9 500.0 685.0 496.6 681.6 492.7 679.7 488.7 677.7 483.4 677.0 476.8 673.0 474.1 667.7 474.1 665.7 470.1 665.1 464.8 667.1 460.9 667.7 456.9 673.0 453.6 678.3 448.9 683.6 446.9 686.3 450.9 691.6 450.3 695.6 447.6 698.2 443.6 703.5 441.6 708.8 439.7 714.1 437.0 719.4 433.7 724.7 431.0 730.0 428.4 734.0 425.1 735.3 419.8 737.3 414.5 740.6 410.5 740.0 403.9 737.3 397.2 736.0 390.6 734.0 385.3 735.3 380.0 733.8 385.1 739.8 382.7 749.6 381.5 758.1 379.1 759.3 370.6 761.7 360.8 762.9 352.3 769.0 351.1 781.2 352.3 790.9 351.1 792.1 339.0 797.0 329.2 803.0 325.6 809.1 320.7Z" fill="#d3ecfe" stroke="#fff" stroke-width="2" stroke-linejoin="round"/>
<path d="M857.0 470.2 866.7 467.8 876.4 471.4 886.2 477.5 897.1 480.0 908.0 478.7 914.1 469.0 922.6 471.4 929.9 467.8 939.6 473.9 949.4 478.7 959.1 486.0 966.4 492.1 972.5 498.2 973.7 507.9 971.2 516.4 966.4 522.5 968.8 529.8 965.2 535.9 959.1 533.4 954.2 535.9 961.5 540.7 964.0 545.6 957.9 546.8 955.4 551.7 949.4 552.9 942.1 550.4 937.2 548.0 929.9 541.9 925.1 535.9 921.4 534.6 917.8 539.5 917.8 548.0 914.1 554.1 909.3 560.2 902.0 565.0 895.9 560.2 888.6 555.3 878.9 551.7 869.2 549.2 857.0 548.0 846.8 543.2 837.1 537.1 837.1 529.8 833.4 517.6 837.1 509.1 849.2 507.9 848.0 500.6 851.7 493.3 849.2 483.6 840.7 477.5 846.8 473.9Z" fill="#dcdcdc" stroke="#fff" stroke-width="1.9" stroke-linejoin="round"/>
<path d="M917.8 539.5 921.4 534.6 925.1 535.9 929.9 541.9 937.2 548.0 942.1 550.4 949.4 552.9 955.4 551.7 957.9 546.8 964.0 545.6 968.8 541.9 973.7 534.6 977.3 537.1 981.0 543.2 989.5 546.8 993.1 551.7 1000.4 550.4 1007.9 547.7 1016.4 549.6 1023.9 551.5 1029.5 555.3 1033.3 560.9 1030.1 568.7 1024.7 578.4 1019.9 580.8 1012.6 584.5 1005.3 583.3 1002.8 588.1 1005.3 595.4 1012.6 596.6 1008.9 601.5 1012.6 607.6 1007.7 611.2 1000.4 607.6 996.8 610.0 991.9 607.6 989.5 602.7 984.6 603.9 979.8 612.4 973.7 622.2 968.8 629.4 964.0 631.9 959.1 625.8 954.2 618.5 949.4 611.2 942.1 603.9 937.2 600.3 934.8 593.0 934.8 583.3 932.4 573.5 928.7 566.2 925.1 559.0 921.4 554.1 917.8 548.0Z" fill="#a6dafd" stroke="#fff" stroke-width="1.9" stroke-linejoin="round"/>
<path d="M1033.3 560.9 1040.8 560.0 1046.4 561.8 1050.2 566.2 1051.5 572.3 1046.6 576.0 1041.7 578.4 1035.7 583.3 1034.4 590.6 1038.1 597.8 1041.7 603.9 1039.3 607.6 1033.2 602.7 1028.4 597.8 1024.7 594.2 1018.6 595.4 1012.6 596.6 1005.3 595.4 1002.8 588.1 1005.3 583.3 1012.6 584.5 1019.9 580.8 1024.7 578.4 1030.1 568.7Z" fill="#a6dafd" stroke="#fff" stroke-width="1.9" stroke-linejoin="round"/>
<path d="M1062.1 464.6 1059.3 468.9 1054.9 465.3 1051.4 463.9 1049.2 467.5 1046.3 470.3 1042.7 473.2 1039.1 477.5 1037.7 483.3 1034.1 486.1 1029.1 488.3 1025.5 485.4 1022.6 489.7 1023.3 494.8 1027.6 499.1 1032.0 502.0 1036.3 504.8 1037.0 510.6 1034.8 514.9 1032.0 519.2 1029.1 520.6 1024.8 521.4 1020.5 523.5 1015.4 524.2 1014.7 529.3 1016.1 535.0 1014.5 529.0 1016.4 534.6 1012.6 540.2 1008.8 543.1 1007.9 547.7 1016.4 549.6 1023.9 551.5 1029.5 555.3 1033.3 560.9 1040.8 560.0 1046.4 561.8 1047.4 557.1 1046.4 551.5 1050.2 547.7 1055.8 545.9 1061.4 542.1 1059.6 536.5 1056.7 531.8 1057.7 528.0 1057.8 532.1 1057.1 526.4 1054.9 522.1 1055.7 516.3 1056.4 510.6 1054.9 503.4 1056.4 497.6 1057.8 491.9 1056.4 486.1 1057.1 480.4 1059.3 476.1 1060.7 470.3Z" fill="#a6dafd" stroke="#fff" stroke-width="1.9" stroke-linejoin="round"/>
<path d="M1057.7 528.0 1065.2 525.2 1072.7 521.4 1080.2 518.6 1085.9 513.9 1089.6 508.3 1095.3 507.4 1100.9 508.3 1105.6 511.1 1110.3 507.4 1114.0 509.2 1113.1 513.0 1108.4 515.8 1104.7 519.6 1108.4 522.4 1112.2 526.1 1115.9 530.8 1118.7 534.6 1114.0 536.5 1110.3 534.6 1108.4 540.2 1104.7 544.0 1106.5 549.6 1110.3 551.5 1112.2 557.1 1110.3 562.8 1104.7 564.7 1099.0 563.7 1093.4 560.9 1091.5 556.2 1085.9 554.3 1080.2 555.3 1074.6 554.3 1069.0 551.5 1065.2 547.7 1061.4 542.1 1059.6 536.5 1056.7 531.8Z" fill="#a6dafd" stroke="#fff" stroke-width="1.9" stroke-linejoin="round"/>
<path d="M1043.6 591.9 1048.3 588.2 1055.8 585.4 1063.3 587.2 1070.8 590.1 1078.4 589.1 1084.0 591.0 1088.7 594.8 1089.6 603.2 1088.7 612.6 1091.5 620.1 1091.5 629.5 1092.4 637.0 1090.6 641.7 1087.7 641.7 1082.1 642.7 1077.4 644.5 1073.7 648.3 1069.9 646.4 1067.1 641.7 1063.3 637.0 1062.4 632.3 1055.8 630.4 1050.2 631.4 1046.4 629.5 1047.4 623.9 1044.5 618.2 1043.6 612.6 1044.5 605.1 1042.7 599.5Z" fill="#a6dafd" stroke="#fff" stroke-width="1.9" stroke-linejoin="round"/>
<path d="M1120.3 442.3 1123.2 444.5 1126.1 448.1 1128.9 451.7 1128.2 456.0 1130.4 459.6 1126.8 461.0 1123.9 463.2 1119.6 463.9 1115.3 462.4 1111.7 459.6 1109.5 456.0 1110.3 451.7 1112.4 448.8 1116.0 445.9Z" fill="#a6dafd" stroke="#fff" stroke-width="1.9" stroke-linejoin="round"/>
<path d="M1130.4 459.6 1133.2 461.7 1136.8 464.6 1137.6 470.3 1134.0 473.2 1131.1 476.8 1128.2 474.7 1125.3 470.3 1124.6 466.0 1123.9 463.2 1126.8 461.0Z" fill="#a6dafd" stroke="#fff" stroke-width="1.9" stroke-linejoin="round"/>
<path d="M1108.4 503.6 1113.1 497.0 1115.9 492.3 1123.4 487.6 1129.1 483.9 1136.6 482.0 1143.2 482.9 1146.0 489.5 1147.9 493.3 1155.4 492.3 1162.0 486.7 1168.5 485.8 1174.2 488.6 1179.8 491.4 1184.5 492.3 1183.6 495.1 1177.9 497.0 1172.3 499.8 1166.7 502.7 1162.0 506.4 1157.3 511.1 1153.5 515.8 1149.7 520.5 1146.9 523.3 1142.2 525.2 1137.5 529.0 1132.8 529.9 1128.1 528.0 1123.4 526.1 1119.7 527.1 1116.9 525.2 1112.2 526.1 1108.4 522.4 1104.7 519.6 1108.4 515.8 1113.1 513.0 1114.0 509.2 1110.3 507.4Z" fill="#4eb2f9" stroke="#fff" stroke-width="1.9" stroke-linejoin="round"/>
<path d="M1119.9 525.9 1123.3 524.9 1125.8 528.4 1129.3 530.9 1133.8 529.4 1137.8 530.9 1141.7 527.9 1145.7 524.9 1147.7 523.4 1150.7 526.9 1155.7 530.9 1159.7 534.9 1162.6 539.9 1164.6 544.8 1166.6 549.8 1169.6 554.8 1173.6 558.8 1176.6 561.7 1171.6 561.7 1168.6 563.7 1166.6 566.7 1165.6 569.7 1163.6 572.2 1159.7 571.7 1155.7 569.7 1151.7 569.7 1146.7 568.7 1143.7 565.7 1141.7 562.7 1140.7 559.8 1143.7 558.8 1147.7 556.8 1149.7 553.8 1148.7 550.8 1145.7 548.8 1142.7 549.8 1139.8 549.8 1137.8 546.8 1136.8 542.8 1134.8 538.9 1132.8 535.9 1129.8 533.9 1126.8 532.9 1123.8 530.9 1120.8 528.9Z" fill="#209ef7" stroke="#fff" stroke-width="1.9" stroke-linejoin="round"/>
<path d="M1137.4 595.8 1141.8 591.8 1144.8 588.9 1149.8 584.9 1152.8 579.9 1154.8 574.9 1156.8 572.4 1161.7 572.9 1165.7 571.9 1167.7 574.9 1168.7 578.9 1169.7 582.4 1173.7 584.9 1176.2 587.4 1174.7 590.8 1172.7 593.8 1174.7 596.8 1173.7 600.8 1171.7 603.8 1168.7 606.8 1165.7 609.8 1163.7 613.7 1161.7 616.7 1157.8 616.2 1153.8 614.2 1149.8 614.7 1146.3 614.2 1144.8 609.8 1141.8 604.8 1139.9 600.8Z" fill="#4eb2f9" stroke="#fff" stroke-width="1.9" stroke-linejoin="round"/>
<path d="M1050.2 684.0 1055.8 680.2 1059.6 674.6 1064.3 669.0 1067.1 664.3 1069.9 659.6 1072.7 653.9 1073.7 648.3 1077.4 644.5 1082.1 642.7 1087.7 641.7 1093.4 642.7 1099.0 643.6 1098.1 648.3 1095.3 651.1 1100.0 653.0 1105.6 652.1 1111.2 649.2 1115.9 648.3 1120.6 650.2 1123.4 653.9 1123.8 659.6 1120.6 664.3 1114.0 667.1 1108.4 669.9 1102.8 671.8 1099.0 673.7 1095.3 676.5 1091.5 678.4 1087.7 677.4 1082.1 680.2 1076.5 682.1 1069.0 684.0 1063.3 684.9 1057.7 686.2 1053.9 689.6 1053.0 695.3 1054.9 699.0 1051.1 698.1 1048.3 693.4 1049.2 687.7Z" fill="#4eb2f9" stroke="#fff" stroke-width="1.9" stroke-linejoin="round"/>
<path d="M721.6 531.0 730.1 529.8 733.8 521.3 739.8 517.6 749.6 518.8 759.3 514.0 769.0 517.6 781.2 515.2 793.3 511.6 803.0 506.7 815.2 504.3 824.9 503.0 834.6 506.7 837.1 509.1 M903.8 417.0 901.9 428.0 890.0 435.0 879.9 440.8 872.0 447.0 867.1 451.9 865.0 460.0 865.7 468.0 M914.1 417.2 917.8 426.5 922.6 437.4 926.3 445.9 937.2 447.1 945.0 444.5 947.5 449.0 945.0 454.0 937.0 458.5 945.7 461.5 952.9 464.6 954.4 470.3 960.1 473.2 964.4 468.9 970.2 467.5 975.9 466.0 983.1 463.2 987.4 463.2 988.9 467.5 986.0 471.8 982.4 476.1 980.2 481.8 981.7 484.7 986.0 488.3 992.4 490.5 M992.4 490.5 996.8 488.3 1000.3 486.9 1004.7 484.0 1003.2 480.4 1005.4 477.5 1007.5 473.2 1009.0 468.9 1011.8 466.0 1014.7 463.9 1018.3 467.5 1016.9 471.8 1020.5 477.5 1021.9 481.8 1025.5 485.4 M992.4 490.5 995.3 494.8 998.2 497.6 1000.3 502.0 1001.8 507.7 1003.9 512.0 1006.1 516.3 1006.8 521.4 1010.4 520.6 1011.8 517.0 1014.7 513.4 1013.3 509.1 1015.4 506.3 1013.3 502.0 1014.7 497.6 1018.3 495.5 1023.3 494.8 M937.2 600.3 933.6 607.6 929.9 619.7 M964.0 631.9 967.6 639.2 973.7 644.0 981.0 646.5 989.5 644.0 995.6 646.5 M986.3 603.2 990.1 605.1 988.2 610.7 991.0 616.4 986.3 618.2 984.4 623.9 988.2 631.4 992.9 635.1 991.9 640.8 994.8 647.4 1001.3 644.5 1008.8 643.6 1016.4 640.8 1023.9 638.9 1031.4 637.0 1038.9 634.2 1046.4 629.5 M986.3 603.2 991.9 602.3 997.6 604.1 1005.1 597.6 1010.7 599.5 1016.4 596.6 1023.9 595.7 1029.5 597.6 1035.1 603.2 1040.8 607.0 1043.6 612.6 M994.8 647.4 997.6 653.0 1003.2 655.8 1008.8 659.6 1007.0 664.3 1001.3 667.1 M1043.6 591.9 1040.8 586.3 1042.7 580.7 1048.3 577.8 1052.1 571.3 1050.2 565.6 1048.3 560.0 1046.4 561.8 M1088.7 594.8 1095.3 591.9 1102.8 588.2 1108.4 587.2 1114.0 586.3 1121.6 584.4 1129.1 587.2 1134.7 591.9 1137.4 595.8 M1108.4 587.2 1112.2 580.7 1110.3 573.2 1112.2 567.5 1108.4 563.8 1110.3 560.0 1110.3 562.8 M1141.8 604.8 1136.6 607.0 1131.0 609.8 1125.3 614.5 1121.6 622.0 1119.7 629.5 1116.9 637.0 1114.0 644.5 1112.2 648.3 M1112.2 557.1 1115.9 551.5 1121.6 549.6 1125.3 544.0 1123.4 538.4 1118.7 534.6 M1062.1 464.6 1066.4 460.3 1070.7 456.7 1075.1 452.4 1080.1 450.9 1085.1 450.2 1090.9 448.8 1093.7 448.1 1095.9 451.7 1092.3 454.5 1095.2 458.1 1098.0 461.7 1096.6 467.5 1093.7 471.8 1090.9 474.7 1089.4 480.4 1092.3 484.7 1093.0 490.5 1090.9 494.8 1088.0 499.1 1088.7 503.4 M1088.7 503.4 1086.6 509.1 1085.1 513.4 1080.8 517.8 1076.5 519.9 1070.7 522.1 1065.0 524.2 1060.7 526.4 1057.1 526.4 M1093.7 448.1 1092.3 443.0 1094.5 438.7 1092.3 434.4 1094.5 429.4 1098.0 425.8 1102.4 427.2 1105.2 431.6 1109.5 430.1 1113.9 427.2 1119.6 425.8 1123.9 422.9 1128.2 420.1 1132.5 418.6 1136.8 421.5 1140.0 424.4 1139.4 437.4 1145.5 441.0 M1088.7 503.4 1092.3 506.3 1098.0 508.4 1103.8 509.1 1108.1 507.7 1108.8 503.4 1112.4 499.1 1116.7 494.8 1121.0 490.5 1126.8 486.1 1132.5 483.3 1136.8 480.4 1136.6 482.0 M1172.3 252.7 1168.6 260.0 1177.1 264.8 1184.4 268.5 1185.6 278.2 1192.9 280.6 1202.6 283.0 1213.6 284.3 1217.2 292.8 1213.6 302.5 1211.2 312.2 1205.1 319.5 1203.9 329.2 1202.6 335.3 1195.4 336.5 1188.1 341.4 1182.0 347.5 1185.6 354.8 1192.9 356.0 1190.5 362.0 1184.4 366.9 1174.7 369.3 1179.6 377.8 1178.3 387.6 1185.6 392.4 1191.7 399.7 1195.4 408.2 M1190.5 363.3 1197.8 370.6 1202.6 376.6 1209.9 377.8 1217.2 379.1 1224.5 380.3 1230.6 385.1 1234.2 391.2 1241.5 392.4 1246.4 397.3 1251.3 404.6 1258.6 402.2 1265.8 399.7 1270.7 404.6 1275.6 407.0 M1195.4 408.2 1202.6 411.9 1208.7 416.7 1212.4 424.0 1216.0 433.8 1218.4 443.5 1217.2 448.3 M1195.4 408.2 1188.1 413.1 1178.3 418.0 1168.6 421.6 1158.9 426.5 1154.0 431.3 1149.2 424.0 1148.0 433.8 1145.5 441.0 1143.1 452.0 1153.5 455.7" fill="none" stroke="#fff" stroke-width="1.9" stroke-linejoin="round" stroke-linecap="round"/>
<path d="M809.1 320.7 814.0 324.4 820.1 331.7 827.3 337.7 837.1 343.8 844.4 351.1 848.0 360.8 846.8 370.6 846.8 377.8 851.7 380.3 857.0 382.7 866.7 382.7 876.4 385.1 886.2 390.0 893.5 394.9 898.3 404.6 903.2 413.1 908.0 416.7 920.2 416.7 934.8 418.0 949.4 418.0 961.5 420.4 973.7 425.2 985.8 430.1 995.6 433.8 1002.8 430.1 1012.6 426.5 1024.7 420.4 1036.9 421.6 1049.0 418.0 1058.8 411.9 1066.0 404.6 1070.9 399.7 1066.0 392.4 1068.5 385.1 1074.5 381.5 1083.1 386.4 1090.3 386.4 1097.6 380.3 1107.4 377.8 1114.7 374.2 1120.0 365.7 1127.3 363.3 1134.6 360.8 1141.9 357.2 1149.2 358.4 1156.5 356.0 1154.0 348.7 1146.7 342.6 1137.0 336.5 1127.3 337.7 1120.0 339.0 1114.7 341.4 1109.8 337.7 1111.0 331.7 1115.9 321.9 1120.0 307.4 1127.3 309.8 1134.6 312.2 1143.1 307.4 1150.4 300.1 1151.6 290.3 1156.5 283.0 1161.3 273.3 1157.7 263.6 1160.1 255.1 1167.4 249.0 1175.9 245.4 1185.6 244.2 1195.4 244.2 1205.1 246.6 1213.6 251.4 1220.9 258.7 1224.5 268.5 1227.0 280.6 1231.8 292.8 1236.7 303.7 1244.0 312.2 1256.1 317.1 1263.4 324.4 1269.5 334.1 1275.6 340.2 1285.3 340.2 1295.0 336.5 1304.7 332.9 1312.0 334.1 1310.8 343.8 1307.2 353.5 1303.5 363.3 1299.9 373.0 1295.0 380.3 1287.7 377.8 1278.0 382.7 1274.4 390.0 1275.6 399.7 1273.1 407.0 1275.6 413.1 1270.7 416.7 1263.4 413.1 1259.8 419.2 1256.1 426.5 1246.4 433.8 1237.9 435.0 1229.4 438.6 1222.1 443.5 1216.0 448.3 1220.9 440.0 1217.6 443.3 1213.2 446.6 1207.7 450.5" fill="none" stroke="#f3b4b8" stroke-width="0.5" stroke-dasharray="1.5 1.5"/>
<path d="M1010.7 672.7 1005.1 669.9 1001.3 667.1 995.7 669.0 991.9 666.1 986.3 668.0 980.7 669.0 975.0 670.8 969.4 672.7 963.8 673.7 964.0 672.0 961.5 679.3 956.7 685.4 950.6 689.0 945.7 682.9 940.9 676.9 937.2 672.0 934.8 663.5 931.1 656.2 932.4 646.5 928.7 639.2 931.1 629.4 929.9 619.7 926.3 610.0 920.2 606.4 912.9 607.6 902.0 603.9 898.3 607.6 886.2 613.6 871.6 618.5 857.0 616.1 841.9 607.6 833.4 608.8 827.3 612.4 824.9 608.8 817.6 610.5 807.9 611.2 795.8 607.6 786.0 603.9 776.3 596.6 769.0 593.0 759.3 586.9 749.6 582.0 742.3 580.8 733.8 577.2 726.5 573.5 720.4 567.5 719.2 559.0 724.0 555.3 725.3 550.4 720.4 545.6 721.6 537.1 719.2 531.0 714.3 524.9 710.7 516.4 701.0 512.8 691.2 509.1 687.6 499.4 688.9 500.0 685.0 496.6 681.6 492.7 679.7 488.7 677.7 483.4 677.0 476.8 673.0 474.1 667.7 474.1 665.7 470.1 665.1 464.8 667.1 460.9 667.7 456.9 673.0 453.6 678.3 448.9 683.6 446.9 686.3 450.9 691.6 450.3 695.6 447.6 698.2 443.6 703.5 441.6 708.8 439.7 714.1 437.0 719.4 433.7 724.7 431.0 730.0 428.4 734.0 425.1 735.3 419.8 737.3 414.5 740.6 410.5 740.0 403.9 737.3 397.2 736.0 390.6 734.0 385.3 735.3 380.0 733.8 385.1 739.8 382.7 749.6 381.5 758.1 379.1 759.3 370.6 761.7 360.8 762.9 352.3 769.0 351.1 781.2 352.3 790.9 351.1 792.1 339.0 797.0 329.2 803.0 325.6 809.1 320.7" fill="none" stroke="#f3b4b8" stroke-width="0.5" stroke-dasharray="1.5 1.5"/>
<path d="M1172.3 642.7 1177.0 643.6 1178.3 648.3 1176.0 655.8 1172.3 665.2 1168.5 674.6 1165.7 681.2 1162.9 678.4 1159.1 670.8 1157.3 665.2 1159.1 657.7 1162.9 650.2 1167.6 645.5Z" fill="#dcdcdc" stroke="#fff" stroke-width="1.2" stroke-linejoin="round"/>
<path d="M1036.1 710.3 1040.8 708.4 1048.3 709.4 1055.8 710.3 1058.6 713.1 1055.8 717.8 1050.2 721.6 1044.5 723.1 1038.9 721.2 1036.1 716.9Z" fill="#d3ecfe" stroke="#fff" stroke-width="1.2" stroke-linejoin="round"/>
<path d="M1044.2 744.9 1050.2 755.9 M1053.9 788.7 1051.5 799.6 M1030.8 844.6 1032.0 855.5 M1069.7 883.5 1079.4 879.8 M1109.8 843.4 1115.9 834.9 M1000.4 881.0 1004.1 878.1 M1169.8 693.4 1177.9 682.9 M1151.1 724.3 1156.5 714.5 M1146.3 748.6 1146.7 760.0 M1140.7 804.5 1146.3 792.3 M1183.7 662.3 1185.6 650.1 M1251.3 532.2 1254.4 523.7 M1212.4 868.4 1218.4 865.2 M1223.3 861.1 1227.0 855.5" fill="none" stroke="#fff" stroke-width="1.8"/>
<path d="M1044.2 744.9 1050.2 755.9 M1053.9 788.7 1051.5 799.6 M1030.8 844.6 1032.0 855.5 M1069.7 883.5 1079.4 879.8 M1109.8 843.4 1115.9 834.9 M1000.4 881.0 1004.1 878.1 M1169.8 693.4 1177.9 682.9 M1151.1 724.3 1156.5 714.5 M1146.3 748.6 1146.7 760.0 M1140.7 804.5 1146.3 792.3 M1183.7 662.3 1185.6 650.1 M1251.3 532.2 1254.4 523.7 M1212.4 868.4 1218.4 865.2 M1223.3 861.1 1227.0 855.5" fill="none" stroke="#e8858c" stroke-width="0.7" transform="translate(0.5,0.3)"/>
</g>
<g font-size="11.5" fill="#4c4c4c" text-anchor="middle" stroke="#fff" stroke-width="1.2" stroke-opacity=".3" paint-order="stroke" stroke-linejoin="round">
<text x="812.8" y="404.6">新疆</text>
<text x="850.0" y="594.2">西藏</text>
<text x="1069.3" y="448.0">内蒙古</text>
<text x="1226.2" y="376.0">黑龙江</text>
<text x="1213.6" y="405.1">吉林</text>
<text x="1193.0" y="434.2">辽宁</text>
<text x="1119.5" y="460.9">北京</text>
<text x="1126.8" y="472.2">天津</text>
<text x="1011.3" y="480.6">宁夏</text>
<text x="1078.0" y="489.2">山西</text>
<text x="1100.2" y="487.2">河北</text>
<text x="1126.2" y="505.2">山东</text>
<text x="985.5" y="513.2">甘肃</text>
<text x="1039.0" y="534.8">陕西</text>
<text x="1089.3" y="530.0">河南</text>
<text x="1127.2" y="567.5">安徽</text>
<text x="1145.0" y="564.2">江苏</text>
<text x="1174.2" y="574.5">上海</text>
<text x="1096.2" y="581.8">湖北</text>
<text x="1157.5" y="585.3">浙江</text>
<text x="988.2" y="583.0">四川</text>
<text x="1014.5" y="595.2">重庆</text>
<text x="1082.1" y="610.8">湖南</text>
<text x="1113.1" y="605.9">江西</text>
<text x="1015.4" y="630.0">贵州</text>
<text x="975.0" y="651.0">云南</text>
<text x="1033.3" y="675.0">广西</text>
<text x="1084.9" y="670.9">广东</text>
<text x="1149.4" y="637.1">福建</text>
<text x="1053.0" y="707.2">海南</text>
</g>
<g fill="#3b6fc0" text-anchor="middle" stroke="#fff" stroke-width="1.4" stroke-opacity=".5" paint-order="stroke">
<text x="1156.3" y="479.6" font-size="13" letter-spacing="1">渤海</text>
<text x="1190.1" y="534.5" font-size="14" letter-spacing="1">黄海</text>
<text x="1202.3" y="599.8" font-size="14" letter-spacing="1">东海</text>
<text x="1097.6" y="788.3" font-size="14" letter-spacing="1">南海</text>
</g>
</svg>
<div class="abs" style="left:13px;top:11px;font-size:15.4px;font-weight:bold;color:#2c3a4b;white-space:nowrap;line-height:22px">各省份获奖成果总数</div>
<div class="abs" style="left:13px;top:41px;width:154px;overflow:hidden;font-size:11.5px;color:#111;white-space:nowrap;line-height:17.4px">获奖成果总数&nbsp;&nbsp;涉及30个省份，<br>前三名省份：江苏,山东,广东，<br>后三名省份：西藏,内蒙古,甘肃</div>
<div class="abs" style="right:17px;top:13px;font-size:11.7px;font-weight:500;color:#2a2af5;white-space:nowrap;line-height:18px">*各省份获奖统计及排名</div>
<div class="abs" style="right:16px;top:40px;font-size:11.5px;color:#111;white-space:nowrap;line-height:18px">*点击各省市，左方图表显示相应省市获奖情况</div>
<div class="abs" style="left:709px;top:292px;width:73px;height:108px;background:#f5f7fc;border-radius:2px;box-shadow:0 1px 5px rgba(60,80,130,.45);font-size:11.5px;color:#333;line-height:14px">
  <div class="abs" style="left:8px;top:11px;width:10px;height:10px;background:#209ef7"></div><div class="abs" style="left:23px;top:9px">120-150</div>
  <div class="abs" style="left:8px;top:30px;width:10px;height:10px;background:#4eb2f9"></div><div class="abs" style="left:23px;top:28px">90-120</div>
  <div class="abs" style="left:8px;top:49px;width:10px;height:10px;background:#7ac6fb"></div><div class="abs" style="left:23px;top:47px">60-90</div>
  <div class="abs" style="left:8px;top:68px;width:10px;height:10px;background:#a6dafd"></div><div class="abs" style="left:23px;top:66px">30-60</div>
  <div class="abs" style="left:8px;top:88px;width:10px;height:10px;background:#d3ecfe"></div><div class="abs" style="left:23px;top:86px">0-30</div>
</div>
<svg class="abs" style="left:4px;top:640px" width="18" height="18" viewBox="0 0 18 18"><rect x=".5" y=".5" width="17" height="17" rx="2.500" fill="#e9f4ff"/><path d="M1 3.500c2-1.200 4-1.200 5.500 0v3H1Z" fill="#b9e3a3"/><path d="M2 9.800 15.500 3 11 16.500 8.800 11.200Z" fill="#1687f0"/><path d="M8.800 11.200 15.500 3 11 16.500Z" fill="#0b5fc4"/><path d="M8.800 11.200l-.5 4 2-2.300Z" fill="#0b4fa0"/></svg>
<div class="abs" style="left:24px;top:641px;font-size:13px;font-weight:700;color:#1d1d1d;white-space:nowrap;line-height:16px;letter-spacing:0;font-family:'Noto Sans CJK SC',sans-serif">高德地图</div>
<div class="abs" style="left:85px;top:642px;font-size:12px;color:#555;white-space:nowrap;line-height:16px">© 2023 AutoNavi - GS(2021)6375号</div>

</div>
</body>
</html>
